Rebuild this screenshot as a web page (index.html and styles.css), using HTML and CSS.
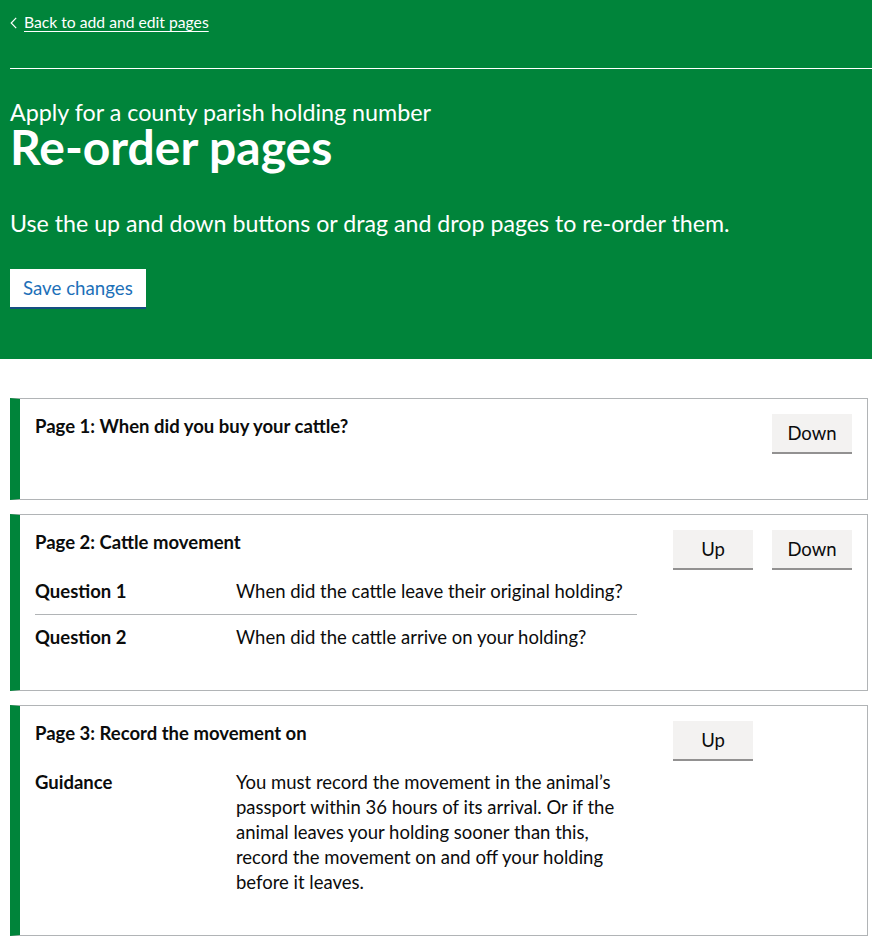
FILE: index.html
```html
<!DOCTYPE html>
<html lang="en">
<head>
<meta charset="utf-8">
<title>Re-order pages</title>
<link rel="stylesheet" href="styles.css">
</head>
<body>
<header class="hero">
  <div class="hero-top">
    <a class="back-link" href="#">
      <svg class="back-chevron" width="7" height="12" viewBox="0 0 7 12" aria-hidden="true"><path d="M6.2 0.8 L1.2 6 L6.2 11.2" fill="none" stroke="#ffffff" stroke-width="1.2"/></svg>
      <span class="back-text">Back to add and edit pages</span>
    </a>
  </div>
  <div class="hero-body">
    <span class="caption">Apply for a county parish holding number</span>
    <h1 class="title">Re-order pages</h1>
    <p class="lead">Use the up and down buttons or drag and drop pages to re-order them.</p>
    <button class="btn-save" type="button">Save changes</button>
  </div>
</header>

<main class="pages">
  <section class="card">
    <div class="card-main">
      <h2 class="card-title">Page 1: When did you buy your cattle?</h2>
    </div>
    <div class="card-actions">
      <button class="btn-move btn-down" type="button">Down</button>
    </div>
  </section>

  <section class="card">
    <div class="card-main">
      <h2 class="card-title">Page 2: Cattle movement</h2>
      <dl class="summary">
        <div class="summary-row">
          <dt class="summary-key">Question 1</dt>
          <dd class="summary-value">When did the cattle leave their original holding?</dd>
        </div>
        <div class="summary-row">
          <dt class="summary-key">Question 2</dt>
          <dd class="summary-value">When did the cattle arrive on your holding?</dd>
        </div>
      </dl>
    </div>
    <div class="card-actions">
      <button class="btn-move btn-up" type="button">Up</button>
      <button class="btn-move btn-down" type="button">Down</button>
    </div>
  </section>

  <section class="card">
    <div class="card-main">
      <h2 class="card-title">Page 3: Record the movement on</h2>
      <dl class="summary">
        <div class="summary-row">
          <dt class="summary-key">Guidance</dt>
          <dd class="summary-value">You must record the movement in the animal’s passport within 36 hours of its arrival. Or if the animal leaves your holding sooner than this, record the movement on and off your holding before it leaves.</dd>
        </div>
      </dl>
    </div>
    <div class="card-actions">
      <button class="btn-move btn-up" type="button">Up</button>
    </div>
  </section>
</main>
</body>
</html>
```
FILE: styles.css
```css
* { box-sizing: border-box; }

body {
  margin: 0;
  font-family: Lato, "Noto Sans", sans-serif;
  color: #0b0c0c;
  background: #ffffff;
}

.hero {
  background: #00843a;
  color: #ffffff;
  padding-bottom: 52px;
}

.hero-top {
  margin-left: 10px;
  padding-top: 12px;
  height: 69px;
  border-bottom: 1px solid #ffffff;
}

.back-link {
  display: inline-flex;
  align-items: center;
  gap: 7px;
  color: #ffffff;
  text-decoration: none;
  font-size: 15.7px;
  line-height: 20px;
}

.back-chevron {
  display: block;
  margin-top: 1px;
}

.back-text {
  text-decoration: underline;
  text-decoration-thickness: 1px;
  text-underline-offset: 3px;
}

.hero-body {
  padding: 31px 10px 0;
}

.caption {
  display: block;
  font-size: 23.3px;
  line-height: 25px;
}

.title {
  margin: 0;
  font-size: 48px;
  line-height: 44px;
  font-weight: 700;
}

.lead {
  margin: 39px 0 0;
  font-size: 23.2px;
  line-height: 30px;
}

.btn-save {
  display: block;
  margin-top: 31px;
  font-family: inherit;
  font-size: 18.7px;
  line-height: 19px;
  color: #1d70b8;
  background: #ffffff;
  border: 2px solid transparent;
  border-radius: 0;
  padding: 8px 11px 7px;
  box-shadow: 0 2px 0 #144e81;
  cursor: pointer;
}

.pages {
  padding: 39px 4px 10px 10px;
}

.card {
  display: flex;
  gap: 36px;
  border: 1px solid #b1b4b6;
  border-left: 10px solid #00843a;
  padding: 15px;
  margin-bottom: 14px;
}

.card-main {
  width: 602px;
}

.card-title {
  margin: 0 0 14px;
  font-size: 18.5px;
  line-height: 25px;
  font-weight: 700;
}

.summary {
  margin: 0 0 15px;
}

.summary-row {
  display: flex;
  padding: 10px 0;
  font-size: 18.5px;
  line-height: 25px;
}

.summary-row + .summary-row {
  border-top: 1px solid #b1b4b6;
}

.summary-key {
  width: 201px;
  flex-shrink: 0;
  font-weight: 700;
}

.summary-value {
  margin: 0;
  width: 401px;
  padding-right: 8px;
}

.card-actions {
  display: grid;
  grid-template-columns: 80px 80px;
  column-gap: 19px;
  align-content: start;
}

.btn-move {
  font-family: inherit;
  font-size: 18.5px;
  line-height: 19px;
  color: #0b0c0c;
  background: #f3f2f1;
  border: 2px solid transparent;
  border-radius: 0;
  padding: 8px 0 7px;
  box-shadow: 0 2px 0 #929191;
  margin-bottom: 32px;
  cursor: pointer;
}

.btn-up { grid-column: 1; }
.btn-down { grid-column: 2; }
```
